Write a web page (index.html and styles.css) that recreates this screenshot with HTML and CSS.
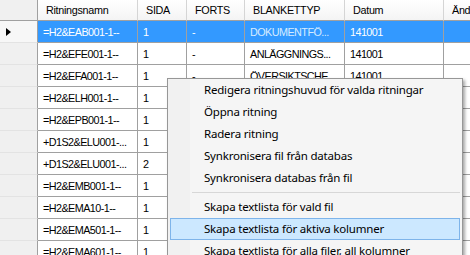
FILE: index.html
```html
<!DOCTYPE html>
<html>
<head>
<meta charset="utf-8">
<link rel="stylesheet" href="styles.css">
</head>
<body>
<div class="grid">
  <div class="row head">
    <div class="rh corner"></div>
    <div class="c c1">Ritningsnamn</div>
    <div class="c c2">SIDA</div>
    <div class="c c3">FORTS</div>
    <div class="c c4">BLANKETTYP</div>
    <div class="c c5">Datum</div>
    <div class="c c6">Änd</div>
  </div>
  <div class="row sel">
    <div class="rh cur"><span class="tri"></span></div>
    <div class="c c1">=H2&amp;EAB001-1--</div>
    <div class="c c2">1</div>
    <div class="c c3">-</div>
    <div class="c c4 lt">DOKUMENTFÖ...</div>
    <div class="c c5">141001</div>
    <div class="c c6"></div>
  </div>
  <div class="row">
    <div class="rh"></div>
    <div class="c c1">=H2&amp;EFE001-1--</div>
    <div class="c c2">1</div>
    <div class="c c3">-</div>
    <div class="c c4">ANLÄGGNINGS...</div>
    <div class="c c5">141001</div>
    <div class="c c6"></div>
  </div>
  <div class="row">
    <div class="rh"></div>
    <div class="c c1">=H2&amp;EFA001-1--</div>
    <div class="c c2">1</div>
    <div class="c c3">-</div>
    <div class="c c4">ÖVERSIKTSCHE...</div>
    <div class="c c5">141001</div>
    <div class="c c6"></div>
  </div>
  <div class="row">
    <div class="rh"></div>
    <div class="c c1">=H2&amp;ELH001-1--</div>
    <div class="c c2">1</div>
    <div class="c c3">-</div>
    <div class="c c4"></div>
    <div class="c c5">141001</div>
    <div class="c c6"></div>
  </div>
  <div class="row">
    <div class="rh"></div>
    <div class="c c1">=H2&amp;EPB001-1--</div>
    <div class="c c2">1</div>
    <div class="c c3">-</div>
    <div class="c c4"></div>
    <div class="c c5">141001</div>
    <div class="c c6"></div>
  </div>
  <div class="row">
    <div class="rh"></div>
    <div class="c c1">+D1S2&amp;ELU001-...</div>
    <div class="c c2">1</div>
    <div class="c c3">-</div>
    <div class="c c4"></div>
    <div class="c c5">141001</div>
    <div class="c c6"></div>
  </div>
  <div class="row">
    <div class="rh"></div>
    <div class="c c1">+D1S2&amp;ELU001-...</div>
    <div class="c c2">2</div>
    <div class="c c3">-</div>
    <div class="c c4"></div>
    <div class="c c5">141001</div>
    <div class="c c6"></div>
  </div>
  <div class="row">
    <div class="rh"></div>
    <div class="c c1">=H2&amp;EMB001-1--</div>
    <div class="c c2">1</div>
    <div class="c c3">-</div>
    <div class="c c4"></div>
    <div class="c c5">141001</div>
    <div class="c c6"></div>
  </div>
  <div class="row">
    <div class="rh"></div>
    <div class="c c1">=H2&amp;EMA10-1--</div>
    <div class="c c2">1</div>
    <div class="c c3">-</div>
    <div class="c c4"></div>
    <div class="c c5">141001</div>
    <div class="c c6"></div>
  </div>
  <div class="row">
    <div class="rh"></div>
    <div class="c c1">=H2&amp;EMA501-1--</div>
    <div class="c c2">1</div>
    <div class="c c3">-</div>
    <div class="c c4"></div>
    <div class="c c5">141001</div>
    <div class="c c6"></div>
  </div>
  <div class="row">
    <div class="rh"></div>
    <div class="c c1">=H2&amp;EMA601-1--</div>
    <div class="c c2">1</div>
    <div class="c c3">-</div>
    <div class="c c4"></div>
    <div class="c c5">141001</div>
    <div class="c c6"></div>
  </div>

  <div class="menu">
    <div class="item">Redigera ritningshuvud för valda ritningar</div>
    <div class="item">Öppna ritning</div>
    <div class="item">Radera ritning</div>
    <div class="item">Synkronisera fil från databas</div>
    <div class="item">Synkronisera databas från fil</div>
    <div class="sep"></div>
    <div class="item">Skapa textlista för vald fil</div>
    <div class="item hot">Skapa textlista för aktiva kolumner</div>
    <div class="item">Skapa textlista för alla filer, all kolumner</div>
  </div>
</div>
</body>
</html>
```
FILE: styles.css
```css
html, body {
  margin: 0;
  padding: 0;
  background: #ffffff;
}
.grid {
  position: relative;
  width: 470px;
  height: 255px;
  overflow: hidden;
  font-family: "Liberation Sans", Arial, sans-serif;
  font-size: 10.8px;
  letter-spacing: -0.55px;
  color: #000;
}
.row {
  display: flex;
  height: 22px;
  white-space: nowrap;
}
.row.head {
  height: 21px;
}
.rh {
  box-sizing: border-box;
  flex: 0 0 38px;
  background: #f0f0f0;
  border-bottom: 1px solid #e3e3e3;
  border-right: 1px solid #a0a0a0;
  display: flex;
  align-items: center;
}
.rh.corner {
  background: #f0f0f0;
  border-bottom: 1px solid #a0a0a0;
}
.rh.cur {
  background: #f7f7f7;
}
.tri {
  width: 0;
  height: 0;
  margin-left: 6px;
  border-top: 4.5px solid transparent;
  border-bottom: 4.5px solid transparent;
  border-left: 5px solid #000;
}
.c {
  box-sizing: border-box;
  border-right: 1px solid #a0a0a0;
  border-bottom: 1px solid #a0a0a0;
  padding-left: 5px;
  display: flex;
  align-items: center;
  overflow: hidden;
}
.head .c {
  background: linear-gradient(#ffffff, #f4f4f4);
  border-right: 1px solid #d5d5d5;
  border-bottom: 1px solid #a0a0a0;
  padding-left: 8px;
  letter-spacing: -0.3px;
}
.c1 { flex: 0 0 100px; }
.c2 { flex: 0 0 49px; }
.c3 { flex: 0 0 58px; }
.c4 { flex: 0 0 100px; }
.c5 { flex: 0 0 99px; }
.c6 { flex: 0 0 60px; }
.sel .c {
  background: #3399ff;
  color: #ffffff;
}
.sel .c.lt {
  color: #d6ecff;
}
.menu {
  position: absolute;
  left: 167px;
  top: 78px;
  width: 296px;
  box-sizing: border-box;
  border: 1px solid #979797;
  background: #f5f5f5;
  box-shadow: 2px 2px 3px rgba(0, 0, 0, 0.35);
  padding: 0 2px 2px 2px;
  font-family: "Noto Sans", "Open Sans", sans-serif;
  font-size: 11.5px;
  letter-spacing: -0.2px;
  color: #000;
  background-image: linear-gradient(to right, #f1f1f1 0, #f1f1f1 22px, #f5f5f5 22px);
}
.item {
  box-sizing: border-box;
  height: 22px;
  line-height: 20px;
  padding-left: 33px;
  border: 1px solid transparent;
  white-space: nowrap;
}
.item.hot {
  background: #cce8ff;
  border-color: #7eb4ea;
}
.sep {
  height: 7px;
  margin-left: 22px;
  box-sizing: border-box;
  border-top: 3px solid transparent;
}
.sep::after {
  content: "";
  display: block;
  height: 1px;
  background: #d7d7d7;
}
```
